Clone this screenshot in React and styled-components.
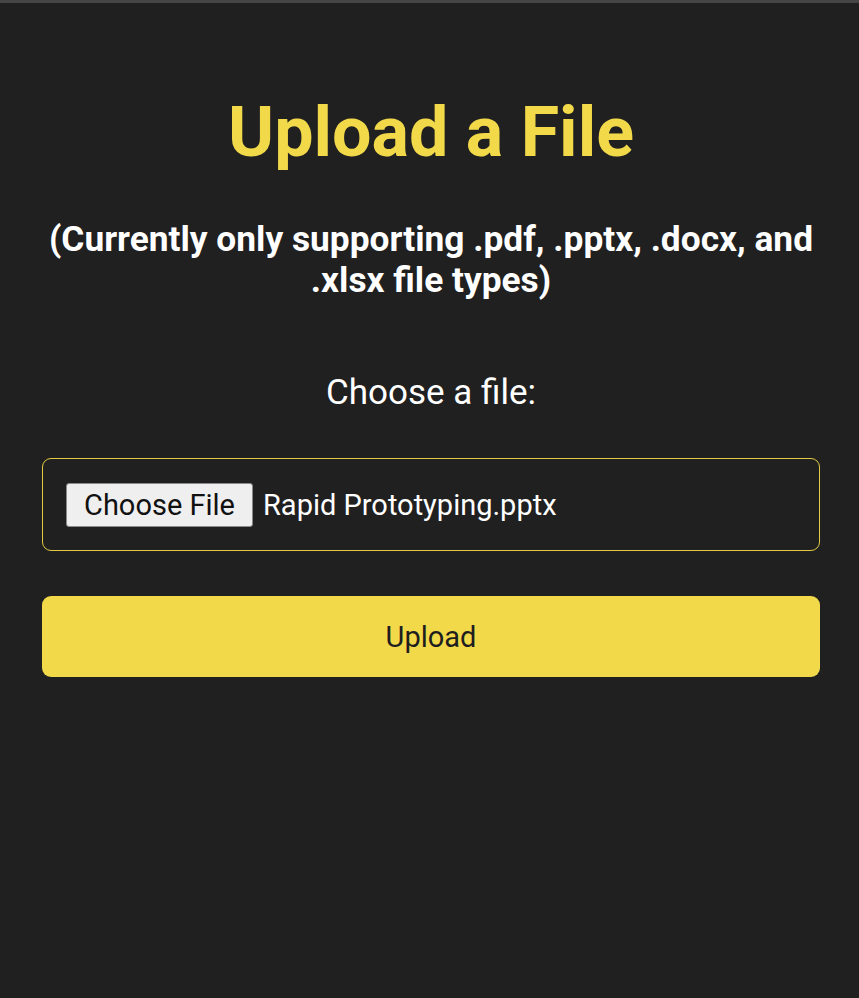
import React from "react";
import styled, { createGlobalStyle } from "styled-components";

const GlobalStyle = createGlobalStyle`
  html, body {
    margin: 0;
    padding: 0;
    background: #202020;
  }
  body {
    font-family: Roboto, "Noto Sans", "Liberation Sans", sans-serif;
    color: #ffffff;
  }
  * { box-sizing: border-box; }
`;

const Page = styled.div`
  min-height: 998px;
  background: #202020;
  border-top: 3px solid #454545;
  display: flex;
  flex-direction: column;
  align-items: stretch;
  padding: 0 39px 0 42px;
`;

const Title = styled.h1`
  margin: 88px 0 0;
  text-align: center;
  font-size: 70px;
  line-height: 82px;
  font-weight: 700;
  color: #f2d94a;
`;

const Subtitle = styled.h2`
  margin: 46px 0 0;
  text-align: center;
  font-size: 35.3px;
  line-height: 41px;
  font-weight: 700;
  color: #ffffff;
`;

const Label = styled.label`
  margin-top: 71px;
  text-align: center;
  font-size: 35px;
  line-height: 41px;
  font-weight: 400;
  color: #ffffff;
`;

const FileBox = styled.div`
  margin-top: 45px;
  height: 93px;
  border: 1.5px solid #e2ca45;
  border-radius: 9px;
  display: flex;
  align-items: center;
  padding: 0 23px;
  gap: 10px;
`;

const HiddenInput = styled.input`
  display: none;
`;

const ChooseButton = styled.label`
  height: 44px;
  padding: 0 17px 0 17px;
  display: flex;
  align-items: center;
  background: #efefef;
  border: 1.5px solid #8a8a8a;
  border-radius: 3px;
  color: #111;
  font-size: 29px;
  cursor: pointer;
`;

const FileName = styled.span`
  font-size: 29px;
  color: #ffffff;
`;

const UploadButton = styled.button`
  margin-top: 45px;
  height: 81px;
  border: none;
  border-radius: 9px;
  background: #f2d94a;
  color: #1e1e1e;
  font-family: Roboto, "Noto Sans", sans-serif;
  font-size: 29px;
  cursor: pointer;
`;

export default function App() {
  return (
    <>
      <GlobalStyle />
      <Page>
        <Title>Upload a File</Title>
        <Subtitle>
          (Currently only supporting .pdf, .pptx, .docx, and .xlsx file types)
        </Subtitle>
        <Label htmlFor="file">Choose a file:</Label>
        <FileBox>
          <HiddenInput id="file" type="file" />
          <ChooseButton htmlFor="file">Choose File</ChooseButton>
          <FileName>Rapid Prototyping.pptx</FileName>
        </FileBox>
        <UploadButton>Upload</UploadButton>
      </Page>
    </>
  );
}
